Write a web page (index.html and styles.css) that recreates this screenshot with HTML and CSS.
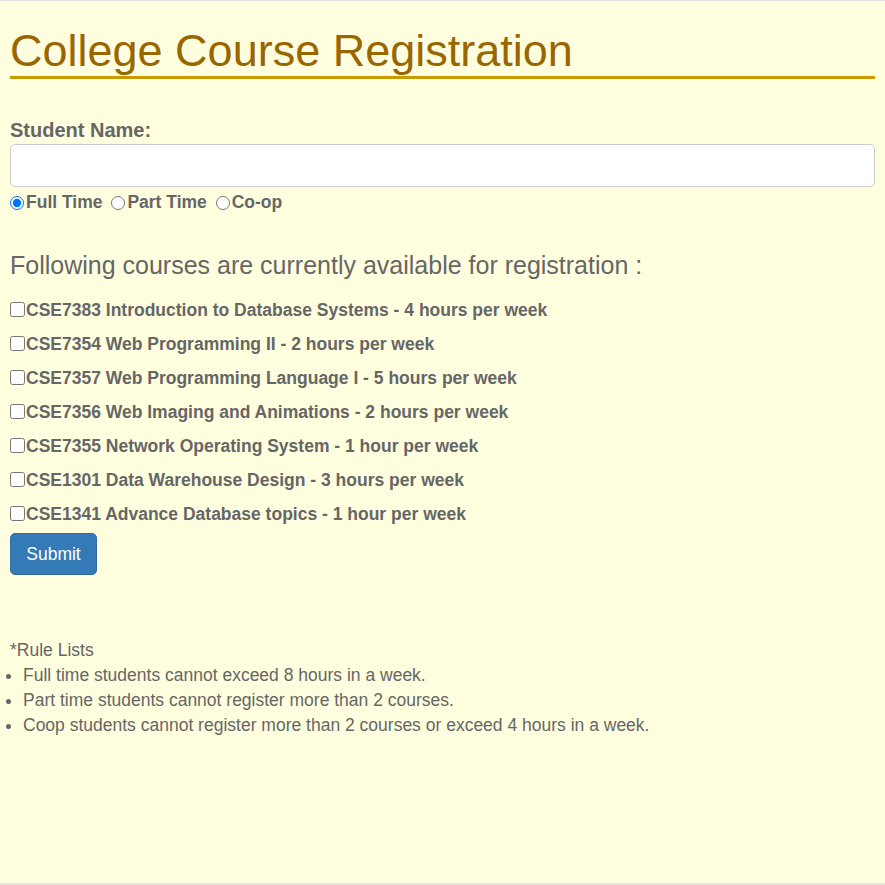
FILE: index.html
```html
<!DOCTYPE html>
<html lang="en">
<head>
<meta charset="utf-8">
<title>College Course Registration</title>
<link rel="stylesheet" href="styles.css">
</head>
<body>
<h1 class="title">College Course Registration</h1>
<form class="reg-form">
  <label class="name-label" for="student">Student Name:</label>
  <input class="name-input" id="student" type="text">
  <div class="status-row">
    <label class="opt"><input type="radio" name="status" checked>Full Time</label>
    <label class="opt"><input type="radio" name="status">Part Time</label>
    <label class="opt"><input type="radio" name="status">Co-op</label>
  </div>
  <h2 class="subhead">Following courses are currently available for registration :</h2>
  <div class="courses">
    <label class="course"><input type="checkbox">CSE7383 Introduction to Database Systems - 4 hours per week</label>
    <label class="course"><input type="checkbox">CSE7354 Web Programming II - 2 hours per week</label>
    <label class="course"><input type="checkbox">CSE7357 Web Programming Language I - 5 hours per week</label>
    <label class="course"><input type="checkbox">CSE7356 Web Imaging and Animations - 2 hours per week</label>
    <label class="course"><input type="checkbox">CSE7355 Network Operating System - 1 hour per week</label>
    <label class="course"><input type="checkbox">CSE1301 Data Warehouse Design - 3 hours per week</label>
    <label class="course"><input type="checkbox">CSE1341 Advance Database topics - 1 hour per week</label>
  </div>
  <button class="btn-submit" type="button">Submit</button>
</form>
<div class="rules">
  <div class="rules-title">*Rule Lists</div>
  <ul class="rules-list">
    <li>Full time students cannot exceed 8 hours in a week.</li>
    <li>Part time students cannot register more than 2 courses.</li>
    <li>Coop students cannot register more than 2 courses or exceed 4 hours in a week.</li>
  </ul>
</div>
</body>
</html>
```
FILE: styles.css
```css
html {
  margin: 0;
  padding: 0;
  background: #e2e2e2;
}
body {
  margin: 1px 0 0;
  padding: 0 10px;
  box-sizing: border-box;
  height: 882px;
  background: #ffffe0;
  font-family: "Liberation Sans", Arial, sans-serif;
  font-size: 17.5px;
  line-height: 25px;
  color: #666;
}
.title {
  margin: 25px 0 0;
  font-size: 45px;
  font-weight: normal;
  line-height: 50px;
  color: #996600;
  border-bottom: 3px solid #cc9900;
}
.reg-form {
  display: flex;
  flex-direction: column;
  align-items: flex-start;
}
.name-label {
  display: block;
  margin: 39px 0 2px;
  font-size: 20px;
  font-weight: bold;
  line-height: 24px;
}
.name-input {
  display: block;
  box-sizing: border-box;
  width: 100%;
  height: 43px;
  margin: 0;
  border: 1px solid #ccc;
  border-radius: 5px;
  background: #fff;
  font: inherit;
}
.status-row {
  margin-top: 3px;
  font-weight: bold;
  line-height: 25px;
}
.opt input {
  width: 14px;
  height: 14px;
  margin: 0 2px 0 0;
  vertical-align: -2px;
}
.opt + .opt input {
  margin-left: 4px;
}
.subhead {
  margin: 36px 0 0;
  font-size: 25px;
  font-weight: normal;
  line-height: 28px;
}
.courses {
  display: flex;
  flex-direction: column;
  gap: 9px;
  margin-top: 19px;
}
.course {
  font-weight: bold;
  line-height: 25px;
}
.course input {
  width: 15px;
  height: 15px;
  margin: 0 1px 0 0;
  vertical-align: -1px;
}
.btn-submit {
  margin-top: 6px;
  box-sizing: border-box;
  width: 87px;
  height: 42px;
  padding: 0 15px;
  border: 1px solid #2e6da4;
  border-radius: 5px;
  background: #337ab7;
  color: #fff;
  font-family: "Liberation Sans", Arial, sans-serif;
  font-size: 17.5px;
  line-height: 40px;
}
.rules {
  margin-top: 63px;
}
.rules-list {
  margin: 0;
  padding-left: 13px;
}
```
